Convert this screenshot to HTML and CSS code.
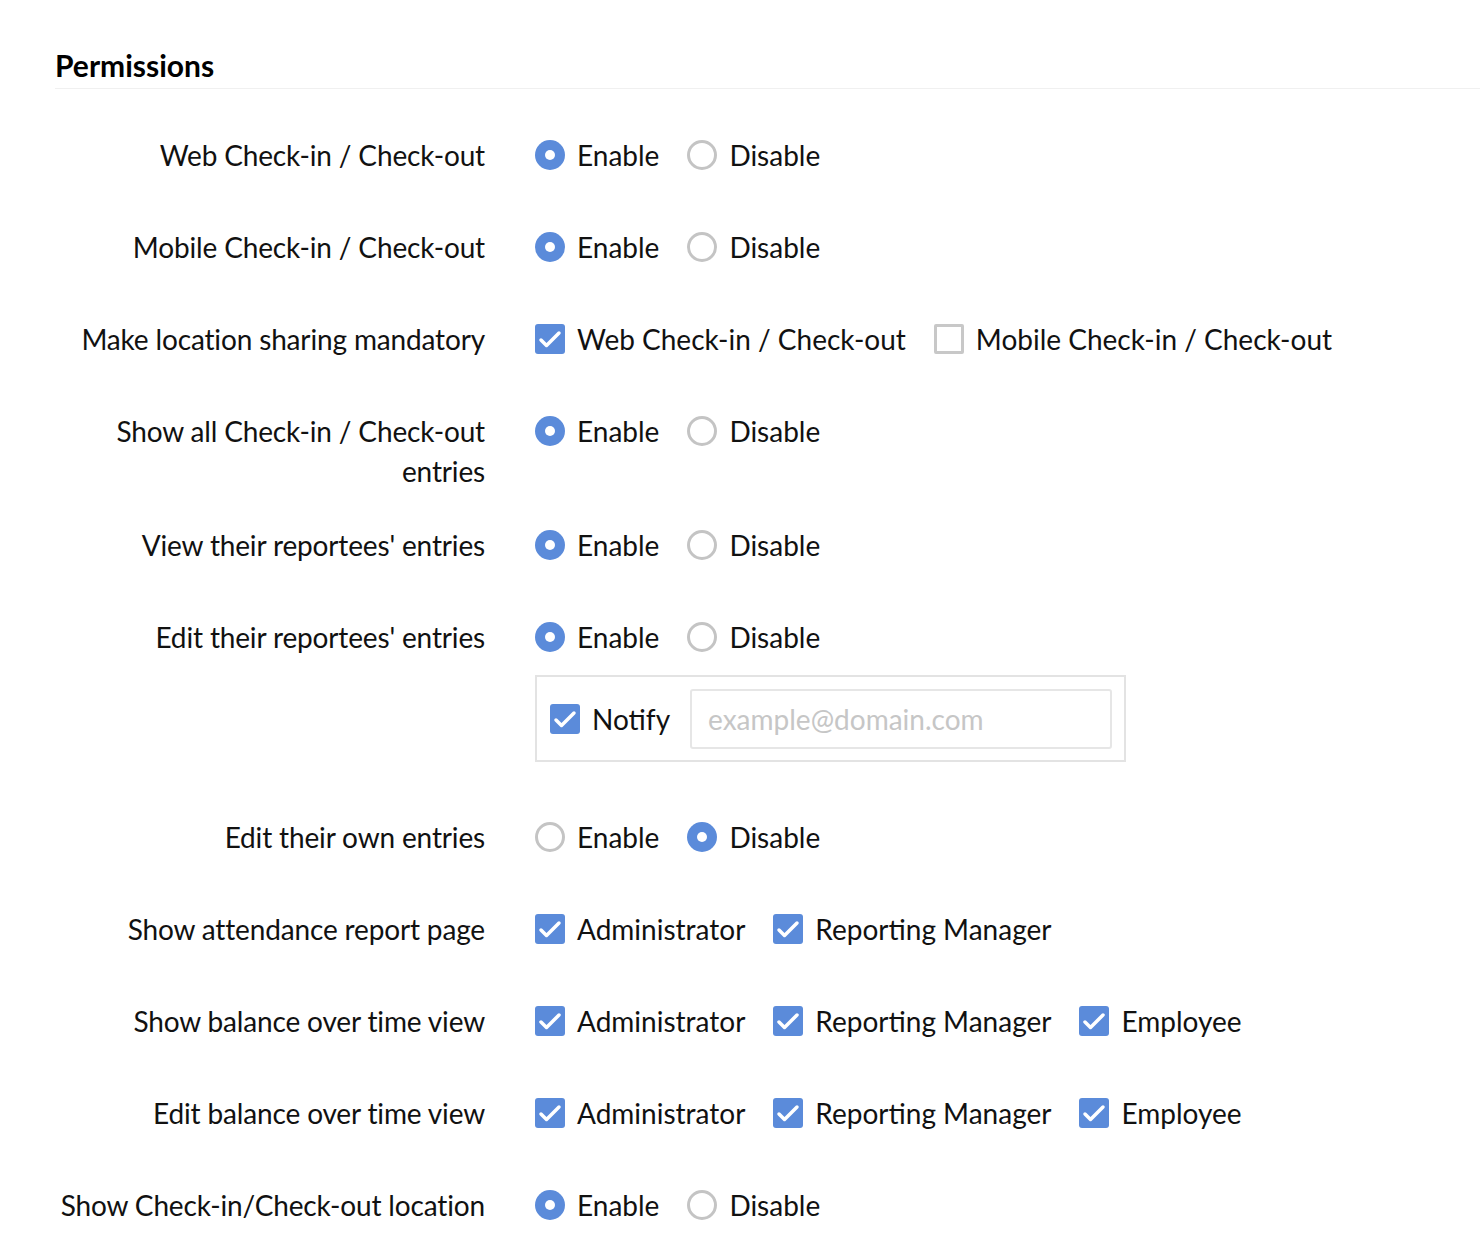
FILE: index.html
```html
<!DOCTYPE html>
<html>
	<head>
		<meta charset="UTF-8">
		<title>Permissions</title>
		<link rel="stylesheet" href="styles.css">
	</head>
	<body>
		<div class="page">
			<h2 class="title">Permissions</h2>

			<div class="row">
				<div class="label">Web Check-in / Check-out</div>
				<div class="opts">
					<div class="group">
						<span class="opt"><i class="radio on"></i>Enable</span>
						<span class="opt"><i class="radio"></i>Disable</span>
					</div>
				</div>
			</div>

			<div class="row">
				<div class="label">Mobile Check-in / Check-out</div>
				<div class="opts">
					<div class="group">
						<span class="opt"><i class="radio on"></i>Enable</span>
						<span class="opt"><i class="radio"></i>Disable</span>
					</div>
				</div>
			</div>

			<div class="row">
				<div class="label">Make location sharing mandatory</div>
				<div class="opts">
					<div class="group">
						<span class="opt"><i class="check on"><svg viewBox="0 0 30 30"><polyline points="6,16 11.5,21.5 24,9"/></svg></i>Web Check-in / Check-out</span>
						<span class="opt"><i class="check"></i>Mobile Check-in / Check-out</span>
					</div>
				</div>
			</div>

			<div class="row">
				<div class="label">Show all Check-in / Check-out entries</div>
				<div class="opts">
					<div class="group">
						<span class="opt"><i class="radio on"></i>Enable</span>
						<span class="opt"><i class="radio"></i>Disable</span>
					</div>
				</div>
			</div>

			<div class="row">
				<div class="label">View their reportees' entries</div>
				<div class="opts">
					<div class="group">
						<span class="opt"><i class="radio on"></i>Enable</span>
						<span class="opt"><i class="radio"></i>Disable</span>
					</div>
				</div>
			</div>

			<div class="row">
				<div class="label">Edit their reportees' entries</div>
				<div class="opts">
					<div class="group">
						<span class="opt"><i class="radio on"></i>Enable</span>
						<span class="opt"><i class="radio"></i>Disable</span>
					</div>
					<div class="notify">
						<span class="opt"><i class="check on"><svg viewBox="0 0 30 30"><polyline points="6,16 11.5,21.5 24,9"/></svg></i>Notify</span>
						<input class="mail" type="text" placeholder="example@domain.com">
					</div>
				</div>
			</div>

			<div class="row">
				<div class="label">Edit their own entries</div>
				<div class="opts">
					<div class="group">
						<span class="opt"><i class="radio"></i>Enable</span>
						<span class="opt"><i class="radio on"></i>Disable</span>
					</div>
				</div>
			</div>

			<div class="row">
				<div class="label">Show attendance report page</div>
				<div class="opts">
					<div class="group">
						<span class="opt"><i class="check on"><svg viewBox="0 0 30 30"><polyline points="6,16 11.5,21.5 24,9"/></svg></i>Administrator</span>
						<span class="opt"><i class="check on"><svg viewBox="0 0 30 30"><polyline points="6,16 11.5,21.5 24,9"/></svg></i>Reporting Manager</span>
					</div>
				</div>
			</div>

			<div class="row">
				<div class="label">Show balance over time view</div>
				<div class="opts">
					<div class="group">
						<span class="opt"><i class="check on"><svg viewBox="0 0 30 30"><polyline points="6,16 11.5,21.5 24,9"/></svg></i>Administrator</span>
						<span class="opt"><i class="check on"><svg viewBox="0 0 30 30"><polyline points="6,16 11.5,21.5 24,9"/></svg></i>Reporting Manager</span>
						<span class="opt"><i class="check on"><svg viewBox="0 0 30 30"><polyline points="6,16 11.5,21.5 24,9"/></svg></i>Employee</span>
					</div>
				</div>
			</div>

			<div class="row">
				<div class="label">Edit balance over time view</div>
				<div class="opts">
					<div class="group">
						<span class="opt"><i class="check on"><svg viewBox="0 0 30 30"><polyline points="6,16 11.5,21.5 24,9"/></svg></i>Administrator</span>
						<span class="opt"><i class="check on"><svg viewBox="0 0 30 30"><polyline points="6,16 11.5,21.5 24,9"/></svg></i>Reporting Manager</span>
						<span class="opt"><i class="check on"><svg viewBox="0 0 30 30"><polyline points="6,16 11.5,21.5 24,9"/></svg></i>Employee</span>
					</div>
				</div>
			</div>

			<div class="row last">
				<div class="label">Show Check-in/Check-out location</div>
				<div class="opts">
					<div class="group">
						<span class="opt"><i class="radio on"></i>Enable</span>
						<span class="opt"><i class="radio"></i>Disable</span>
					</div>
				</div>
			</div>
		</div>
	</body>
</html>
```

FILE: styles.css
```css
*{
	padding:0;
	margin:0;
	box-sizing:border-box;
}
body{
	font-family:Lato,"Open Sans",sans-serif;
	font-size:28px;
	color:#111;
	background:#fff;
}
.page{
	padding:45px 0 0 45px;
}
.title{
	margin-left:10px;
	font-size:30px;
	font-weight:bold;
	line-height:40px;
	height:44px;
	color:#000;
	border-bottom:1px solid #f0f0f0;
	margin-bottom:46px;
}
.row{
	display:flex;
	align-items:flex-start;
	min-height:58px;
	margin-bottom:34px;
}
.row.last{
	margin-bottom:0;
}
.label{
	width:440px;
	flex-shrink:0;
	text-align:right;
	line-height:40px;
	letter-spacing:-0.15px;
}
.opts{
	margin-left:50px;
}
.group{
	display:flex;
	align-items:center;
	height:40px;
}
.opt{
	display:flex;
	align-items:center;
	margin-right:28px;
	white-space:nowrap;
}
.radio,.check{
	display:inline-block;
	width:30px;
	height:30px;
	margin-right:12px;
	flex-shrink:0;
}
.radio{
	border-radius:50%;
	border:3px solid #c4c4c4;
}
.radio.on{
	border:none;
	background:#5b8bda;
	position:relative;
}
.radio.on:after{
	content:"";
	position:absolute;
	left:10px;
	top:10px;
	width:10px;
	height:10px;
	border-radius:50%;
	background:#fff;
}
.check{
	border:3px solid #c8c8c8;
	border-radius:2px;
}
.check.on{
	border:none;
	border-radius:3px;
	background:#5b8bda;
}
.check svg{
	display:block;
	width:30px;
	height:30px;
}
.check polyline{
	fill:none;
	stroke:#fff;
	stroke-width:3.5;
	stroke-linecap:round;
	stroke-linejoin:round;
}
.notify{
	display:flex;
	align-items:center;
	width:591px;
	height:87px;
	margin-top:18px;
	margin-bottom:21px;
	padding:0 12px 0 13px;
	border:2px solid #e3e3e3;
}
.notify .opt{
	margin-right:20px;
}
.mail{
	flex:1;
	height:60px;
	border:2px solid #e6e6e6;
	border-radius:3px;
	padding:0 16px;
	font-family:Lato,"Open Sans",sans-serif;
	font-size:28px;
	color:#111;
	outline:none;
}
.mail::placeholder{
	color:#c6c6c6;
}
```
